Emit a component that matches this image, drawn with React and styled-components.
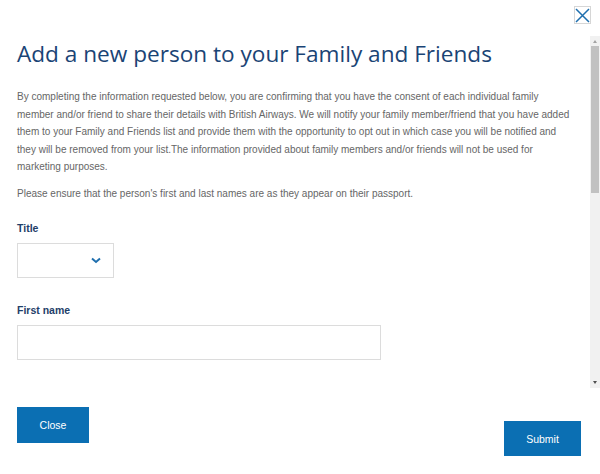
import styled, { createGlobalStyle } from "styled-components";

const GlobalStyle = createGlobalStyle`
  html, body {
    margin: 0;
    padding: 0;
    background: #ffffff;
  }
  body {
    font-family: "Liberation Sans", Arial, sans-serif;
  }
`;

export default function App() {
    return (
        <>
            <GlobalStyle />
            <Modal>
                <Header>
                    <CloseIcon aria-label="Close">
                        <svg width="15" height="15" viewBox="0 0 15 15">
                            <path d="M1 1 L14 14 M14 1 L1 14" stroke="#1f6fae" strokeWidth="1.5" fill="none" />
                        </svg>
                    </CloseIcon>
                </Header>

                <Body>
                    <Content>
                        <Title>Add a new person to your Family and Friends</Title>
                        <Text>
                            By completing the information requested below, you are confirming that you have the consent of each individual family member and/or friend to share their details with British Airways. We will notify your family member/friend that you have added them to your Family and Friends list and provide them with the opportunity to opt out in which case you will be notified and they will be removed from your list.The information provided about family members and/or friends will not be used for marketing purposes.
                        </Text>
                        <Text>Please ensure that the person's first and last names are as they appear on their passport.</Text>

                        <Field>
                            <Label>Title</Label>
                            <Select>
                                <svg width="10" height="7" viewBox="0 0 10 7">
                                    <path d="M1 1.5 L5 5 L9 1.5" stroke="#1f6fae" strokeWidth="2" fill="none" />
                                </svg>
                            </Select>
                        </Field>

                        <Field>
                            <Label>First name</Label>
                            <Input />
                        </Field>

                        <Field>
                            <Label>Last name</Label>
                            <Input />
                        </Field>

                        <Field>
                            <Label>Date of birth</Label>
                            <Input $short />
                        </Field>
                    </Content>

                    <ScrollBar>
                        <Arrow />
                        <Thumb />
                        <Track />
                        <Arrow $down />
                    </ScrollBar>
                </Body>

                <Footer>
                    <Button>Close</Button>
                    <Button $low>Submit</Button>
                </Footer>
            </Modal>
        </>
    );
};

const Modal = styled.div`
    display: flex;
    flex-direction: column;
    width: 600px;
    height: 474px;
    overflow: hidden;
`;

const Header = styled.div`
    display: flex;
    justify-content: flex-end;
    height: 36px;
    padding: 6px 9px 0 0;
    box-sizing: border-box;
`;

const CloseIcon = styled.button`
    display: flex;
    align-items: center;
    justify-content: center;
    width: 17px;
    height: 18px;
    padding: 0;
    border: 1px solid #d6d6d6;
    background: #ffffff;
`;

const Body = styled.div`
    display: flex;
    flex: 1;
    min-height: 0;
`;

const Content = styled.div`
    flex: 1;
    overflow: hidden;
    padding: 2px 17px 0 17px;
`;

const ScrollBar = styled.div`
    display: flex;
    flex-direction: column;
    align-items: center;
    width: 10px;
    background: #f1f1f1;
`;

const Arrow = styled.div`
    width: 0;
    height: 0;
    margin: ${props => props.$down ? "3px 0 4px" : "4px 0 3px"};
    border-left: 2.5px solid transparent;
    border-right: 2.5px solid transparent;
    border-bottom: ${props => props.$down ? "none" : "3px solid #a3a3a3"};
    border-top: ${props => props.$down ? "3px solid #505050" : "none"};
`;

const Thumb = styled.div`
    width: 8px;
    height: 147px;
    background: #c1c1c1;
`;

const Track = styled.div`
    flex: 1;
`;

const Title = styled.h1`
    font-family: "Open Sans", "Noto Sans", sans-serif;
    font-weight: 400;
    font-size: 22.6px;
    color: #1a4475;
    margin: 0 0 19px 0;
`;

const Text = styled.p`
    font-size: 10px;
    line-height: 17.5px;
    color: #666666;
    margin: 0 0 9px 0;
`;

const Field = styled.div`
    display: flex;
    flex-direction: column;
    align-items: flex-start;
    gap: 7px;
    margin-top: 18px;

    & + & {
        margin-top: 24px;
    }
`;

const Label = styled.label`
    font-size: 10.5px;
    line-height: 16px;
    font-weight: 700;
    color: #1f4069;
`;

const Select = styled.div`
    display: flex;
    align-items: center;
    justify-content: flex-end;
    width: 97px;
    height: 35px;
    padding-right: 12px;
    box-sizing: border-box;
    border: 1px solid #dcdcdc;
`;

const Input = styled.div`
    width: ${props => props.$short ? "160px" : "364px"};
    height: 35px;
    box-sizing: border-box;
    border: 1px solid #dcdcdc;
`;

const Footer = styled.div`
    display: flex;
    justify-content: space-between;
    align-items: flex-start;
    height: 86px;
    padding: 19px 19px 18px 17px;
    box-sizing: border-box;
`;

const Button = styled.button`
    width: ${props => props.$low ? "77px" : "72px"};
    height: ${props => props.$low ? "35px" : "36px"};
    align-self: ${props => props.$low ? "flex-end" : "flex-start"};
    border: none;
    background: #0b6fb3;
    color: #ffffff;
    font-family: "Liberation Sans", Arial, sans-serif;
    font-size: 10.5px;
`;
